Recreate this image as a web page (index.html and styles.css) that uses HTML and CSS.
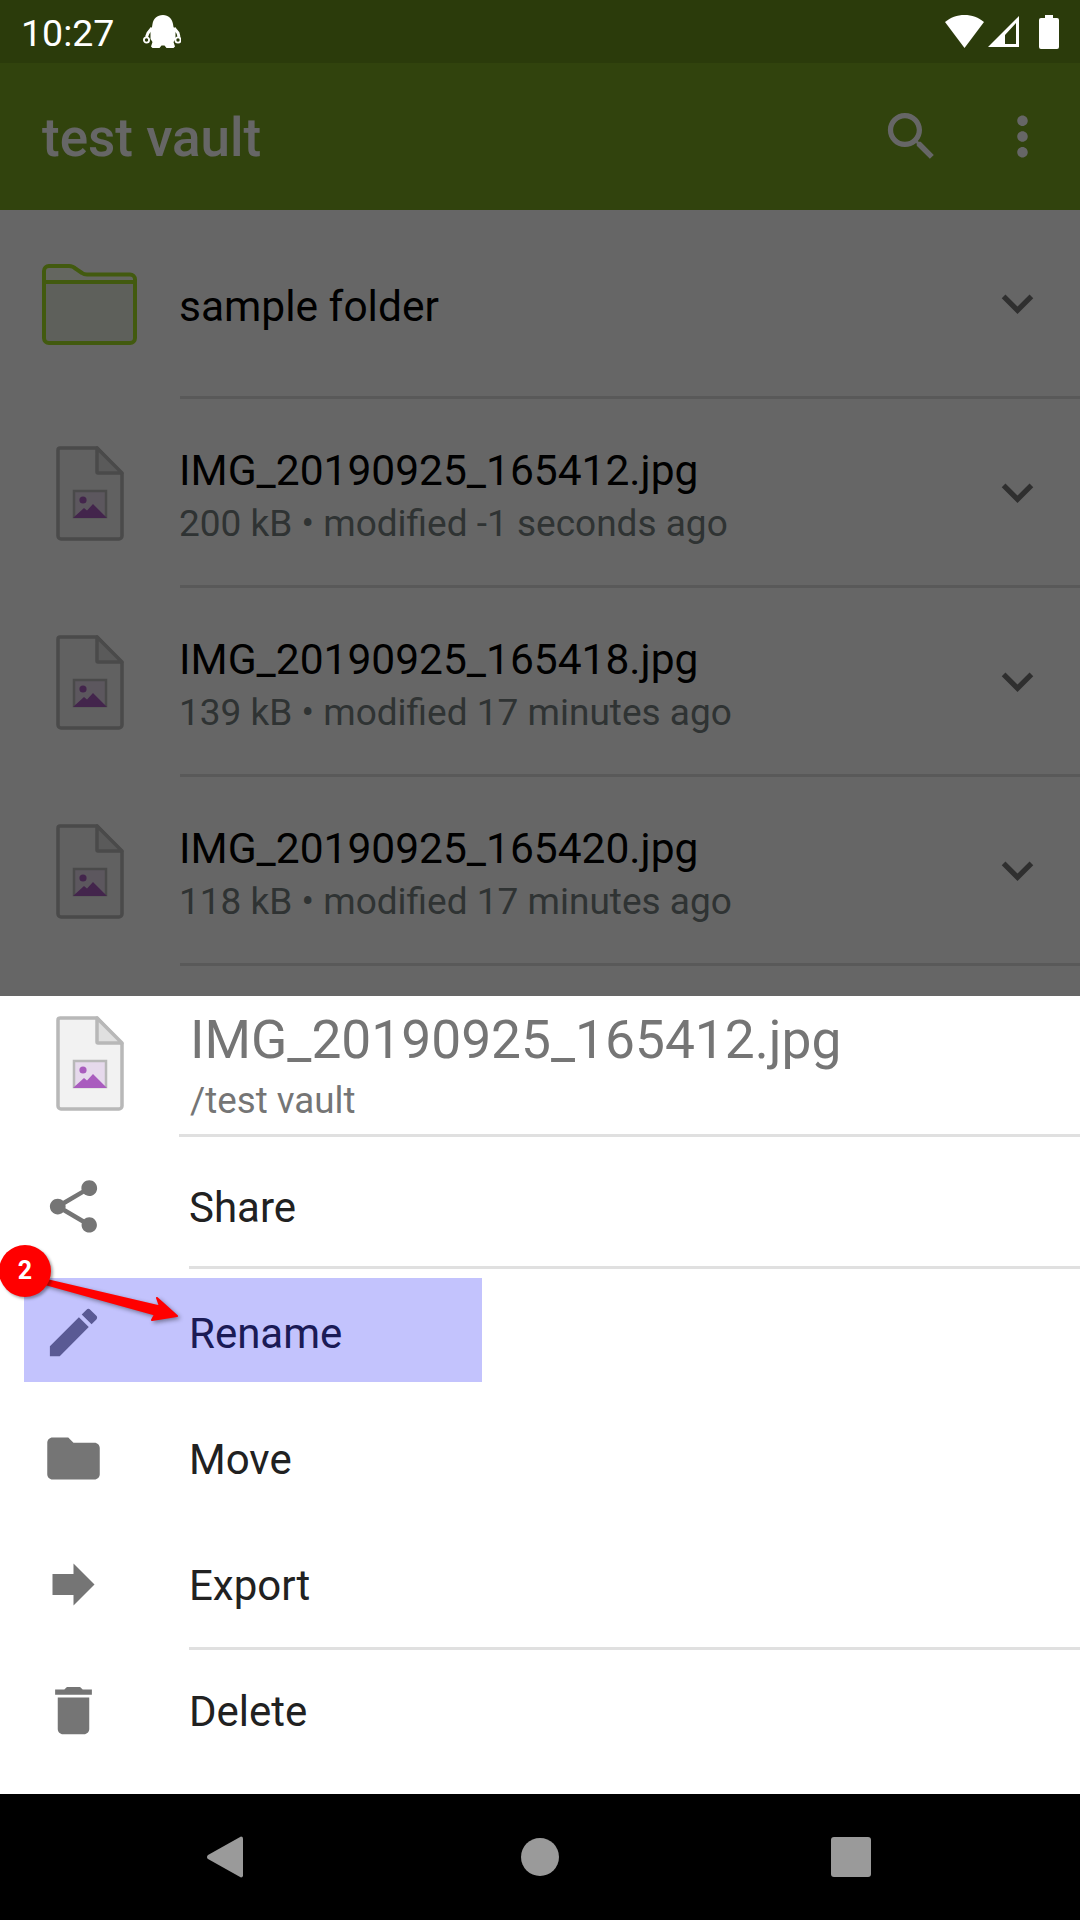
FILE: index.html
```html
<!DOCTYPE html>
<html>
<head>
    <link rel="stylesheet" href="styles.css">
</head>
<body>
    <svg class="defs" width="0" height="0">
        <symbol id="file-icon" viewBox="0 0 68 95">
            <path d="M4 2h37l25 26v62a3 3 0 0 1-3 3H5a3 3 0 0 1-3-3V4a2 2 0 0 1 2-2z" fill="#f2f2f2" stroke="#b8b8b8" stroke-width="3.5"/>
            <path d="M41 2v24a1 1 0 0 0 1 1h24z" fill="#e0e0e0" stroke="#b8b8b8" stroke-width="3.5" stroke-linejoin="round"/>
            <rect x="18" y="45" width="32" height="26" fill="#e6d9ec" stroke="#b8b8b8" stroke-width="2.5"/>
            <circle cx="27" cy="54" r="3.6" fill="#a95cbe"/>
            <path d="M17 72l11-10 3 2.5 6-6.5 14 14z" fill="#a95cbe"/>
        </symbol>
        <symbol id="chevron" viewBox="0 0 24 24">
            <path d="M16.59 8.59L12 13.17 7.41 8.59 6 10l6 6 6-6z"/>
        </symbol>
    </svg>

    <div class="screen">
        <div class="status-bar">
            <span class="clock">10:27</span>
            <svg class="robot" width="38" height="33" viewBox="0 0 38 33">
                <path d="M20 0c-6 0-9.500 3.500-10.500 9l-.5 3-1.500 2.500V24l2 3-1.500 4.500 1.500 1.500h7l2-2.500h3l2 2.500h7l1.500-1.500-1.500-4.500 2-3v-9.500L30.500 12l-.5-3c-1-5.500-4.500-9-10-9z" fill="#fff"/>
                <path d="M9 13l-4 5-1.500 4M31 13l4 5 1 4" fill="none" stroke="#fff" stroke-width="3"/>
                <circle cx="3.500" cy="25" r="2.600" fill="none" stroke="#fff" stroke-width="1.800"/>
                <circle cx="35" cy="25" r="2.600" fill="none" stroke="#fff" stroke-width="1.800"/>
            </svg>
            <div class="status-right">
                <svg width="39" height="33" viewBox="0 0 39 33"><path d="M19.500 0C12 0 5.500 2.500 0 7l19.500 26L39 7C33.500 2.500 27 0 19.500 0z" fill="#fff"/></svg>
                <svg class="signal" width="33" height="33" viewBox="0 0 33 33"><path d="M32 1v31H1zM29 8L18 20v9h11z" fill="#fff" fill-rule="evenodd"/></svg>
                <svg class="battery" width="20" height="34" viewBox="0 0 20 34"><path d="M6 0h8v3h4a2 2 0 0 1 2 2v27a2 2 0 0 1-2 2H2a2 2 0 0 1-2-2V5a2 2 0 0 1 2-2h4z" fill="#fff"/></svg>
            </div>
        </div>

        <div class="main">
            <div class="app-bar">
                <div class="app-title">test vault</div>
                <svg class="action" viewBox="0 0 24 24"><path d="M15.500 14h-.79l-.28-.27C15.410 12.590 16 11.110 16 9.500 16 5.910 13.090 3 9.500 3S3 5.910 3 9.500 5.910 16 9.500 16c1.610 0 3.090-.59 4.230-1.570l.27.28v.79l5 4.990L20.490 19l-4.990-5zm-6 0C7.010 14 5 11.990 5 9.500S7.010 5 9.500 5 14 7.010 14 9.500 11.990 14 9.500 14z"/></svg>
                <svg class="action" viewBox="0 0 24 24"><path d="M12 8c1.100 0 2-.9 2-2s-.9-2-2-2-2 .9-2 2 .9 2 2 2zm0 2c-1.100 0-2 .9-2 2s.9 2 2 2 2-.9 2-2-.9-2-2-2zm0 6c-1.100 0-2 .9-2 2s.9 2 2 2 2-.9 2-2-.9-2-2-2z"/></svg>
            </div>

            <div class="list">
                <div class="row">
                    <div class="row-icon">
                        <svg width="95" height="81" viewBox="0 0 95 81">
                            <path d="M7 2h20c3 0 5 1 7 3l6 4c2 1.500 3 1.500 5 1.500h43a5 5 0 0 1 5 5V74a5 5 0 0 1-5 5H7a5 5 0 0 1-5-5V7a5 5 0 0 1 5-5z" fill="#ecf0e4"/>
                            <path d="M2 7a5 5 0 0 1 5-5h20c3 0 5 1 7 3l6 4c2 1.500 3 1.500 5 1.500h43a5 5 0 0 1 5 5V18H2z" fill="#fafff0"/>
                            <path d="M2 18h91" stroke="#a5e026" stroke-width="4"/>
                            <path d="M7 2h20c3 0 5 1 7 3l6 4c2 1.500 3 1.500 5 1.500h43a5 5 0 0 1 5 5V74a5 5 0 0 1-5 5H7a5 5 0 0 1-5-5V7a5 5 0 0 1 5-5z" fill="none" stroke="#a5e026" stroke-width="4"/>
                        </svg>
                    </div>
                    <div class="row-body">
                        <div class="row-text"><div class="file-name">sample folder</div></div>
                        <svg class="chevron"><use href="#chevron"/></svg>
                    </div>
                </div>
                <div class="row">
                    <div class="row-icon"><svg class="file-icon"><use href="#file-icon"/></svg></div>
                    <div class="row-body">
                        <div class="row-text">
                            <div class="file-name">IMG_20190925_165412.jpg</div>
                            <div class="file-meta">200 kB • modified -1 seconds ago</div>
                        </div>
                        <svg class="chevron"><use href="#chevron"/></svg>
                    </div>
                </div>
                <div class="row">
                    <div class="row-icon"><svg class="file-icon"><use href="#file-icon"/></svg></div>
                    <div class="row-body">
                        <div class="row-text">
                            <div class="file-name">IMG_20190925_165418.jpg</div>
                            <div class="file-meta">139 kB • modified 17 minutes ago</div>
                        </div>
                        <svg class="chevron"><use href="#chevron"/></svg>
                    </div>
                </div>
                <div class="row">
                    <div class="row-icon"><svg class="file-icon"><use href="#file-icon"/></svg></div>
                    <div class="row-body">
                        <div class="row-text">
                            <div class="file-name">IMG_20190925_165420.jpg</div>
                            <div class="file-meta">118 kB • modified 17 minutes ago</div>
                        </div>
                        <svg class="chevron"><use href="#chevron"/></svg>
                    </div>
                </div>
            </div>

            <div class="scrim"></div>

            <div class="sheet">
                <div class="sheet-head">
                    <div class="sheet-icon"><svg class="file-icon"><use href="#file-icon"/></svg></div>
                    <div class="sheet-titles">
                        <div class="sheet-title">IMG_20190925_165412.jpg</div>
                        <div class="sheet-path">/test vault</div>
                    </div>
                </div>

                <div class="menu">
                    <div class="menu-row has-line">
                        <svg class="menu-icon" viewBox="0 0 24 24"><path d="M18 16.080c-.76 0-1.440.3-1.960.77L8.910 12.700c.05-.23.09-.46.09-.7s-.04-.47-.09-.7l7.050-4.110c.54.5 1.250.81 2.040.81 1.660 0 3-1.340 3-3s-1.340-3-3-3-3 1.340-3 3c0 .24.04.47.09.7L8.040 9.810C7.500 9.310 6.790 9 6 9c-1.660 0-3 1.340-3 3s1.340 3 3 3c.79 0 1.500-.31 2.040-.81l7.120 4.160c-.05.21-.08.43-.08.65 0 1.610 1.310 2.920 2.920 2.920 1.610 0 2.920-1.310 2.920-2.920s-1.310-2.920-2.920-2.920z"/></svg>
                        <span class="menu-label">Share</span>
                    </div>
                    <div class="menu-row is-marked">
                        <svg class="menu-icon" viewBox="0 0 24 24"><path d="M3 17.250V21h3.750L17.810 9.940l-3.750-3.750L3 17.250zM20.710 7.040c.39-.39.39-1.020 0-1.410l-2.340-2.340c-.39-.39-1.020-.39-1.410 0l-1.830 1.830 3.750 3.750 1.830-1.830z"/></svg>
                        <span class="menu-label">Rename</span>
                    </div>
                    <div class="menu-row">
                        <svg class="menu-icon" viewBox="0 0 24 24"><path d="M10 4H4c-1.100 0-1.990.9-1.990 2L2 18c0 1.100.9 2 2 2h16c1.100 0 2-.9 2-2V8c0-1.100-.9-2-2-2h-8l-2-2z"/></svg>
                        <span class="menu-label">Move</span>
                    </div>
                    <div class="menu-row has-line line-low">
                        <svg class="menu-icon" viewBox="0 0 24 24"><path d="M4 8h8V4l8 8-8 8v-4H4z"/></svg>
                        <span class="menu-label">Export</span>
                    </div>
                    <div class="menu-row">
                        <svg class="menu-icon" viewBox="0 0 24 24"><path d="M6 19c0 1.100.9 2 2 2h8c1.100 0 2-.9 2-2V7H6v12zM19 4h-3.500l-1-1h-5l-1 1H5v2h14V4z"/></svg>
                        <span class="menu-label">Delete</span>
                    </div>
                </div>

                <!-- annotation on top of the screenshot -->
                <svg class="arrow" viewBox="0 1240 190 95">
                    <path d="M38 1278L160 1306.500 157 1298 177 1316 152 1320 155 1314.500 38 1282z" fill="#f00" stroke="#f00" stroke-width="2" stroke-linejoin="round"/>
                </svg>
                <div class="badge">2</div>
            </div>
        </div>

        <div class="nav-bar">
            <svg width="36" height="42" viewBox="0 0 36 42"><path d="M34 0.500a2 2 0 0 1 2 2v37a2 2 0 0 1-2 2L1 23a2.500 2.500 0 0 1 0-4z" fill="#9a9a9a"/></svg>
            <svg width="38" height="38" viewBox="0 0 38 38"><circle cx="19" cy="19" r="19" fill="#9a9a9a"/></svg>
            <svg class="nav-recents" width="40" height="40" viewBox="0 0 40 40"><rect width="40" height="40" rx="3" fill="#9a9a9a"/></svg>
        </div>
    </div>
</body>
</html>
```

FILE: styles.css
```css
body {
    margin: 0;
    font-family: Roboto, "Liberation Sans", sans-serif;
    background-color: #000;
}
.defs {
    position: absolute;
}
.screen {
    width: 1080px;
    height: 1920px;
    display: flex;
    flex-direction: column;
    overflow: hidden;
}

/* status bar */
.status-bar {
    height: 63px;
    flex: none;
    background-color: #2b3b0b;
    color: #fff;
    display: flex;
    align-items: center;
    padding: 0 21px 0 21px;
}
.clock {
    font-size: 37.5px;
    padding-top: 2px;
}
.robot {
    margin-left: 29px;
}
.status-right {
    margin-left: auto;
    display: flex;
    align-items: center;
}
.signal {
    margin-left: 3px;
}
.battery {
    margin-left: 19px;
}

/* main area, list sits under the scrim */
.main {
    flex: 1;
    position: relative;
    background-color: #fff;
    overflow: hidden;
}
.app-bar {
    height: 147px;
    background-color: #7ba822;
    display: flex;
    align-items: center;
    padding: 0 26.5px 0 42px;
}
.app-title {
    color: #fff;
    font-size: 53px;
    font-weight: 500;
    margin-right: auto;
    padding-top: 2px;
}
.action {
    width: 63px;
    height: 63px;
    fill: #fff;
    margin-left: 47.5px;
}
.row {
    height: 189px;
    display: flex;
}
.row-icon {
    width: 180px;
    flex: none;
    display: flex;
    align-items: center;
    padding-left: 42px;
    box-sizing: border-box;
}
.row .file-icon {
    margin-left: 14px;
}
.file-icon {
    width: 68px;
    height: 95px;
}
.row-body {
    flex: 1;
    display: flex;
    align-items: center;
    border-bottom: 3px solid #dedede;
    padding-right: 31.500px;
}
.row-text {
    flex: 1;
    padding-top: 7px;
    margin-left: -1px;
}
.file-name {
    font-size: 42.5px;
    line-height: 56px;
    color: #000;
}
.file-meta {
    font-size: 37px;
    line-height: 50px;
    color: #75807f;
}
.chevron {
    width: 63px;
    height: 63px;
    margin-left: -1px;
    fill: #757575;
}
.scrim {
    position: absolute;
    top: 0;
    left: 0;
    right: 0;
    bottom: 0;
    background-color: rgba(0, 0, 0, 0.6);
}

/* bottom sheet */
.sheet {
    position: absolute;
    left: 0;
    right: 0;
    bottom: 0;
    height: 798px;
    background-color: #fff;
}
.sheet-head {
    height: 141px;
    display: flex;
}
.sheet-icon {
    width: 179px;
    flex: none;
    padding: 20px 0 0 56px;
    box-sizing: border-box;
}
.sheet-titles {
    flex: 1;
    border-bottom: 3px solid #e0e0e0;
    padding-left: 11px;
    color: #757575;
}
.sheet-title {
    font-size: 53.3px;
    line-height: 66px;
    margin-top: 11px;
    color: #757575;
}
.sheet-path {
    font-size: 36.75px;
    line-height: 48px;
    margin-top: 4px;
}
.menu {
    padding-top: 6px;
}
.menu-row {
    height: 126px;
    display: flex;
    align-items: center;
    position: relative;
}
.menu-icon {
    width: 63px;
    height: 63px;
    flex: none;
    fill: #757575;
    margin-left: 42px;
}
.menu-label {
    font-size: 42px;
    color: #212121;
    margin-left: 84px;
    padding-top: 2px;
}
.has-line::after {
    content: "";
    position: absolute;
    left: 189px;
    right: 0;
    bottom: 0;
    height: 3px;
    background-color: #e0e0e0;
}
.line-low::after {
    bottom: -3px;
}
.is-marked::after {
    content: "";
    position: absolute;
    left: 24px;
    top: 9px;
    width: 458px;
    height: 104px;
    background-color: rgba(8, 8, 247, 0.243);
}
.arrow {
    position: absolute;
    left: 0;
    top: 244px;
    width: 190px;
    height: 95px;
    filter: drop-shadow(2px 2px 2px rgba(0, 0, 0, 0.4));
}
.badge {
    position: absolute;
    left: -1px;
    top: 249px;
    width: 52px;
    height: 52px;
    border-radius: 50%;
    background-color: #f00;
    color: #fff;
    font-size: 25px;
    font-weight: 700;
    line-height: 52px;
    text-align: center;
    box-shadow: 2px 2px 3px rgba(0, 0, 0, 0.35);
}

/* nav bar */
.nav-bar {
    height: 126px;
    flex: none;
    background-color: #000;
    display: flex;
    align-items: center;
    gap: 278px;
    padding-left: 207px;
}
.nav-recents {
    margin-left: -6px;
}
```
